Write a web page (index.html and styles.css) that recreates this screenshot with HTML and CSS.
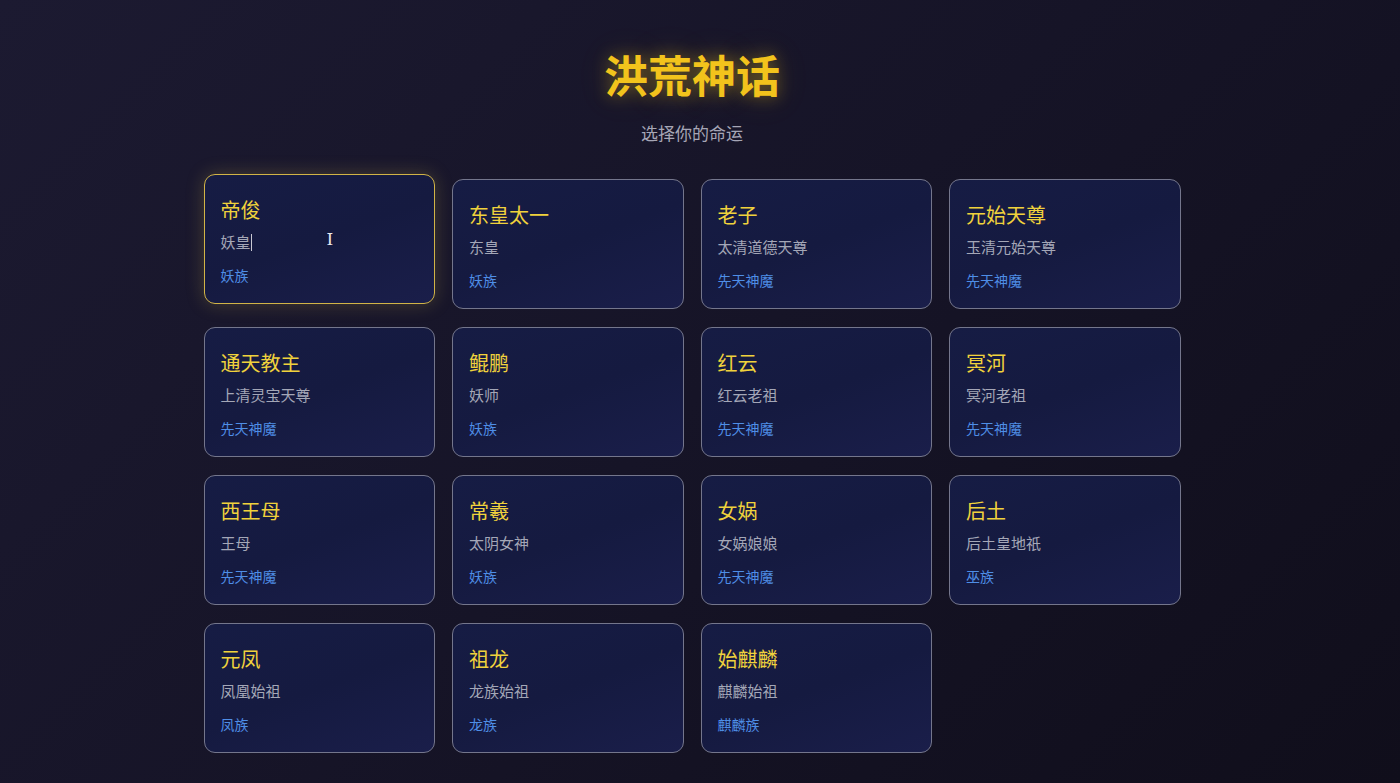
FILE: index.html
```html
<!DOCTYPE html>
<html lang="zh-CN">
<head>
<meta charset="utf-8">
<title>洪荒神话</title>
<link rel="stylesheet" href="styles.css">
</head>
<body>
<main class="page">
  <h1 class="title">洪荒神话</h1>
  <p class="subtitle">选择你的命运</p>
  <section class="grid">
    <div class="card active">
      <div class="name">帝俊</div>
      <div class="desc">妖皇<span class="caret"></span></div>
      <div class="tribe">妖族</div>
      <span class="ibeam">I</span>
    </div>
    <div class="card"><div class="name">东皇太一</div><div class="desc">东皇</div><div class="tribe">妖族</div></div>
    <div class="card"><div class="name">老子</div><div class="desc">太清道德天尊</div><div class="tribe">先天神魔</div></div>
    <div class="card"><div class="name">元始天尊</div><div class="desc">玉清元始天尊</div><div class="tribe">先天神魔</div></div>
    <div class="card"><div class="name">通天教主</div><div class="desc">上清灵宝天尊</div><div class="tribe">先天神魔</div></div>
    <div class="card"><div class="name">鲲鹏</div><div class="desc">妖师</div><div class="tribe">妖族</div></div>
    <div class="card"><div class="name">红云</div><div class="desc">红云老祖</div><div class="tribe">先天神魔</div></div>
    <div class="card"><div class="name">冥河</div><div class="desc">冥河老祖</div><div class="tribe">先天神魔</div></div>
    <div class="card"><div class="name">西王母</div><div class="desc">王母</div><div class="tribe">先天神魔</div></div>
    <div class="card"><div class="name">常羲</div><div class="desc">太阴女神</div><div class="tribe">妖族</div></div>
    <div class="card"><div class="name">女娲</div><div class="desc">女娲娘娘</div><div class="tribe">先天神魔</div></div>
    <div class="card"><div class="name">后土</div><div class="desc">后土皇地祇</div><div class="tribe">巫族</div></div>
    <div class="card"><div class="name">元凤</div><div class="desc">凤凰始祖</div><div class="tribe">凤族</div></div>
    <div class="card"><div class="name">祖龙</div><div class="desc">龙族始祖</div><div class="tribe">龙族</div></div>
    <div class="card"><div class="name">始麒麟</div><div class="desc">麒麟始祖</div><div class="tribe">麒麟族</div></div>
  </section>
</main>
</body>
</html>
```

FILE: styles.css
```css
html, body {
  margin: 0;
  padding: 0;
  height: 100%;
}
body {
  background: linear-gradient(135deg, #1c1a31 0%, #161427 50%, #100e1b 100%);
  font-family: "Noto Sans CJK SC", "Noto Sans", sans-serif;
  color: #d0d0dc;
  overflow: hidden;
  padding-right: 16px;
  box-sizing: border-box;
}
.page {
  width: 977px;
  margin: 0 auto;
  padding-top: 48px;
}
.title {
  margin: 0;
  text-align: center;
  font-size: 44px;
  line-height: 53px;
  font-weight: 700;
  color: #f2c31c;
  letter-spacing: 0;
  text-shadow: 0 0 16px rgba(242, 195, 28, 0.4), 0 0 34px rgba(242, 195, 28, 0.18);
}
.subtitle {
  margin: 19px 0 0;
  text-align: center;
  font-size: 17px;
  line-height: 26px;
  color: #a6a6b6;
}
.grid {
  margin-top: 33px;
  display: grid;
  grid-template-columns: repeat(4, 1fr);
  column-gap: 17px;
  row-gap: 18px;
}
.card {
  position: relative;
  height: 130px;
  box-sizing: border-box;
  padding: 20px 16px 0;
  border: 1px solid #74768c;
  border-radius: 11px;
  background: linear-gradient(160deg, #161c44 0%, #151a40 50%, #1a1e4a 100%);
}
.card.active {
  transform: translateY(-5px);
  border-color: #d1b447;
  box-shadow: 0 0 18px rgba(209, 180, 71, 0.25);
}
.name {
  font-size: 20px;
  line-height: 30px;
  color: #f0d23c;
}
.desc {
  margin-top: 6px;
  font-size: 15px;
  line-height: 22px;
  color: #a4a7b7;
}
.tribe {
  margin-top: 12px;
  font-size: 14px;
  line-height: 21px;
  color: #4f8ee6;
}
.caret {
  display: inline-block;
  width: 1px;
  height: 17px;
  background: #c8c8d2;
  vertical-align: -3px;
}
.ibeam {
  position: absolute;
  left: 122px;
  top: 56px;
  font-family: "DejaVu Serif", serif;
  font-size: 17px;
  color: #e8e8ee;
  line-height: 1;
}
```
